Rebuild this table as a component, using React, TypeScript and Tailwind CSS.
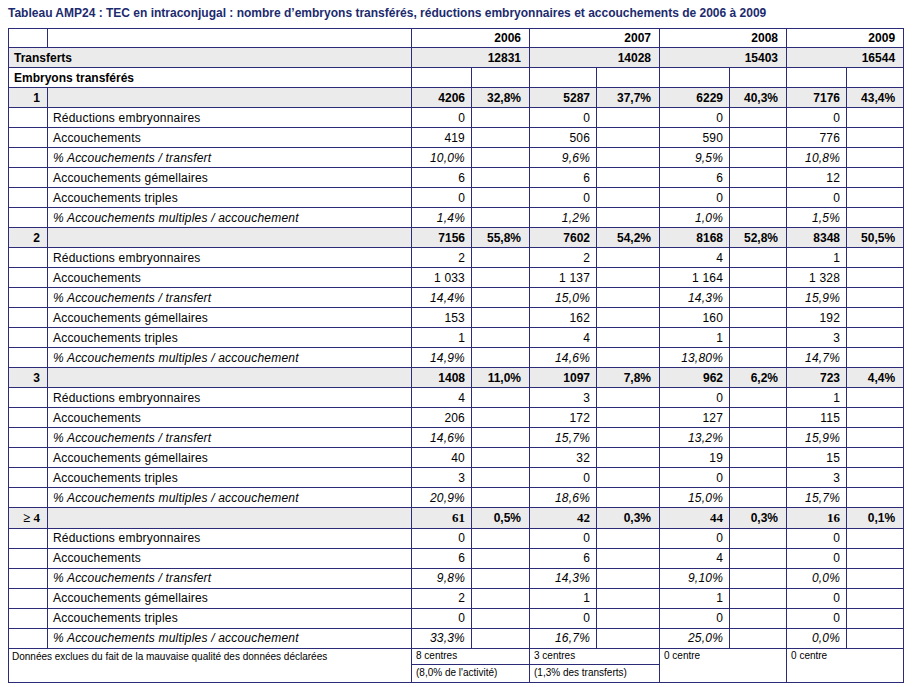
import React from "react";

const sans = "font-['Liberation_Sans',Arial,sans-serif]";

type Group = {
  label: string;
  head: [string, string][];
  rows: string[][];
};

const subLabels = [
  "Réductions embryonnaires",
  "Accouchements",
  "% Accouchements / transfert",
  "Accouchements gémellaires",
  "Accouchements triples",
  "% Accouchements multiples / accouchement",
];

const groups: Group[] = [
  {
    label: "1",
    head: [
      ["4206", "32,8%"],
      ["5287", "37,7%"],
      ["6229", "40,3%"],
      ["7176", "43,4%"],
    ],
    rows: [
      ["0", "0", "0", "0"],
      ["419", "506", "590", "776"],
      ["10,0%", "9,6%", "9,5%", "10,8%"],
      ["6", "6", "6", "12"],
      ["0", "0", "0", "0"],
      ["1,4%", "1,2%", "1,0%", "1,5%"],
    ],
  },
  {
    label: "2",
    head: [
      ["7156", "55,8%"],
      ["7602", "54,2%"],
      ["8168", "52,8%"],
      ["8348", "50,5%"],
    ],
    rows: [
      ["2", "2", "4", "1"],
      ["1 033", "1 137", "1 164", "1 328"],
      ["14,4%", "15,0%", "14,3%", "15,9%"],
      ["153", "162", "160", "192"],
      ["1", "4", "1", "3"],
      ["14,9%", "14,6%", "13,80%", "14,7%"],
    ],
  },
  {
    label: "3",
    head: [
      ["1408", "11,0%"],
      ["1097", "7,8%"],
      ["962", "6,2%"],
      ["723", "4,4%"],
    ],
    rows: [
      ["4", "3", "0", "1"],
      ["206", "172", "127", "115"],
      ["14,6%", "15,7%", "13,2%", "15,9%"],
      ["40", "32", "19", "15"],
      ["3", "0", "0", "3"],
      ["20,9%", "18,6%", "15,0%", "15,7%"],
    ],
  },
  {
    label: "≥ 4",
    head: [
      ["61", "0,5%"],
      ["42", "0,3%"],
      ["44", "0,3%"],
      ["16", "0,1%"],
    ],
    rows: [
      ["0", "0", "0", "0"],
      ["6", "6", "4", "0"],
      ["9,8%", "14,3%", "9,10%", "0,0%"],
      ["2", "1", "1", "0"],
      ["0", "0", "0", "0"],
      ["33,3%", "16,7%", "25,0%", "0,0%"],
    ],
  },
];

const years = ["2006", "2007", "2008", "2009"];
const totals = ["12831", "14028", "15403", "16544"];
const widths = [39, 364, 60, 58, 67, 63, 70, 57, 60, 57];

const cell = "border border-[#2b2b78] p-0";

function GroupRows({ g }: { g: Group }) {
  const serif = g.label === "≥ 4";
  return (
    <>
      <tr className="h-[20px] bg-[#ebebeb] font-bold">
        <td
          className={`${cell} text-right pr-[7px] ${
            serif ? "font-['Liberation_Serif',serif] text-[13px]" : ""
          }`}
        >
          {g.label}
        </td>
        <td className={cell}></td>
        {g.head.map(([v, p], i) => (
          <React.Fragment key={i}>
            <td
              className={`${cell} text-right pr-[6px] ${
                serif ? "font-['Liberation_Serif',serif] text-[13px]" : ""
              }`}
            >
              {v}
            </td>
            <td className={`${cell} text-right pr-[8px]`}>{p}</td>
          </React.Fragment>
        ))}
      </tr>
      {g.rows.map((r, ri) => {
        const it = subLabels[ri].startsWith("%");
        return (
          <tr key={ri} className={`h-[20px] ${it ? "italic" : ""}`}>
            <td className={cell}></td>
            <td className={`${cell} pl-[5px] tracking-[0.2px]`}>{subLabels[ri]}</td>
            {r.map((v, i) => (
              <React.Fragment key={i}>
                <td className={`${cell} text-right pr-[6px] tracking-[0.2px]`}>{v}</td>
                <td className={cell}></td>
              </React.Fragment>
            ))}
          </tr>
        );
      })}
    </>
  );
}

export default function App() {
  return (
    <div className={`${sans} bg-white w-[913px] h-[687px] pl-[8px] pt-[5px] text-[12px] text-black`}>
      <div className="text-[12px] font-bold text-[#1c2a6e] leading-[16px] h-[23px]">
        Tableau AMP24 : TEC en intraconjugal : nombre d’embryons transférés, réductions embryonnaires et
        accouchements de 2006 à 2009
      </div>
      <table className="border-collapse table-fixed w-[896px] border border-[#2b2b78]">
        <colgroup>
          {widths.map((w, i) => (
            <col key={i} style={{ width: w }} />
          ))}
        </colgroup>
        <tbody>
          <tr className="h-[19px] font-bold">
            <td className={cell}></td>
            <td className={cell}></td>
            {years.map((y) => (
              <td key={y} colSpan={2} className={`${cell} text-right pr-[8px]`}>
                {y}
              </td>
            ))}
          </tr>
          <tr className="h-[20px] font-bold bg-[#ebebeb]">
            <td colSpan={2} className={`${cell} pl-[5px]`}>
              Transferts
            </td>
            {totals.map((t) => (
              <td key={t} colSpan={2} className={`${cell} text-right pr-[8px]`}>
                {t}
              </td>
            ))}
          </tr>
          <tr className="h-[20px] font-bold">
            <td colSpan={2} className={`${cell} pl-[5px]`}>
              Embryons transférés
            </td>
            {Array.from({ length: 8 }).map((_, i) => (
              <td key={i} className={cell}></td>
            ))}
          </tr>
          {groups.map((g) => (
            <GroupRows key={g.label} g={g} />
          ))}
          <tr className="h-[16px] text-[10px] leading-[12px]">
            <td colSpan={2} rowSpan={2} className={`${cell} align-top pl-[3px] pt-[2px]`}>
              Données exclues du fait de la mauvaise qualité des données déclarées
            </td>
            <td colSpan={2} className={`${cell} pl-[4px] align-top pt-[1px]`}>
              8 centres
            </td>
            <td colSpan={2} className={`${cell} pl-[4px] align-top pt-[1px]`}>
              3 centres
            </td>
            <td colSpan={2} rowSpan={2} className={`${cell} pl-[4px] align-top pt-[1px]`}>
              0 centre
            </td>
            <td colSpan={2} rowSpan={2} className={`${cell} pl-[4px] align-top pt-[1px]`}>
              0 centre
            </td>
          </tr>
          <tr className="h-[18px] text-[10px] leading-[12px]">
            <td colSpan={2} className={`${cell} pl-[4px]`}>
              (8,0% de l'activité)
            </td>
            <td colSpan={2} className={`${cell} pl-[4px]`}>
              (1,3% des transferts)
            </td>
          </tr>
        </tbody>
      </table>
    </div>
  );
}
